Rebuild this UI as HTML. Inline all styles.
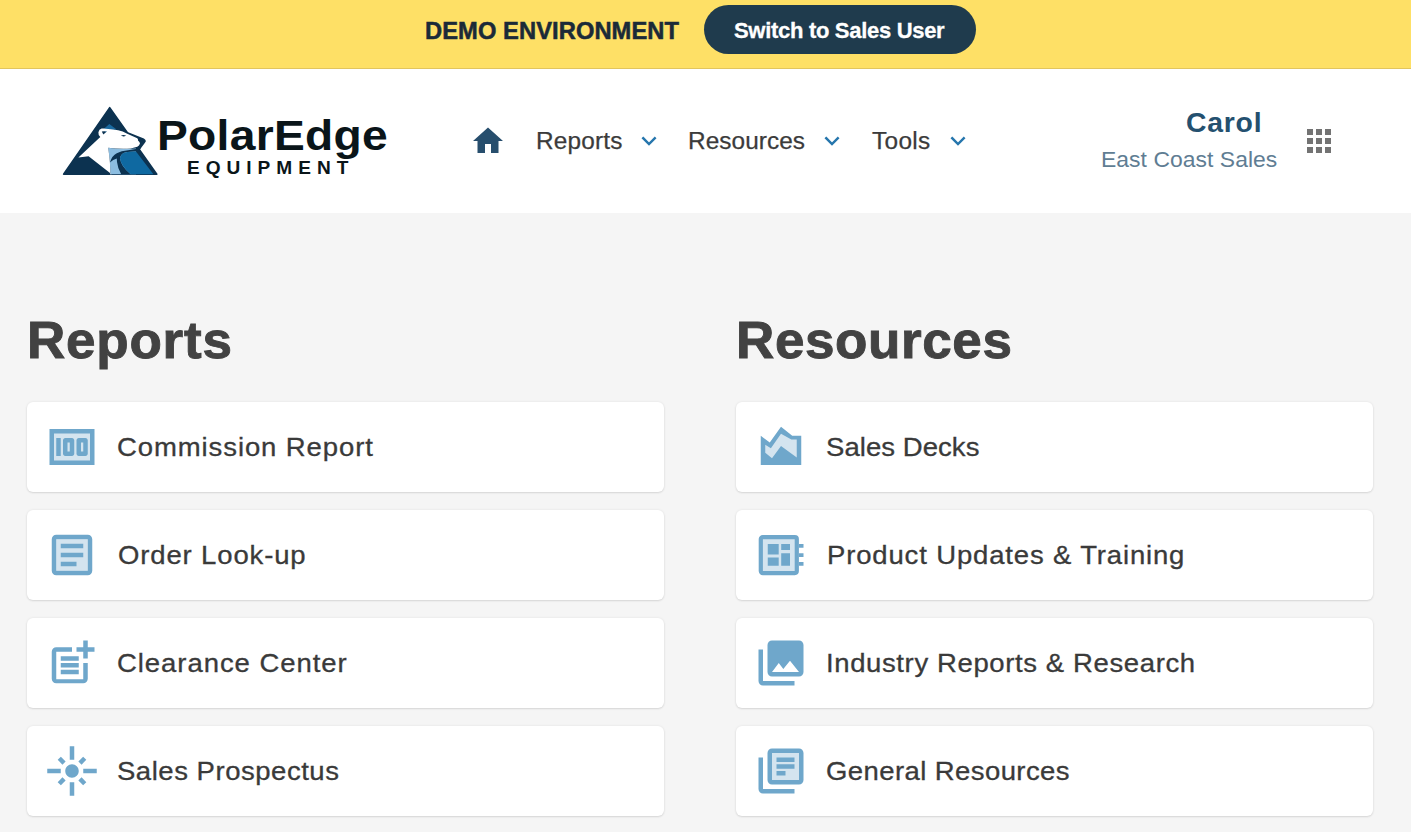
<!DOCTYPE html>
<html><head><meta charset="utf-8">
<style>
*{margin:0;padding:0;box-sizing:border-box}
html,body{width:1411px;height:832px;overflow:hidden;background:#f5f5f5;font-family:"Liberation Sans",sans-serif}
.abs{position:absolute;white-space:nowrap;line-height:1}
#banner{position:absolute;left:0;top:0;width:1411px;height:69px;background:#fee066;border-bottom:1px solid #e2c55e}
#header{position:absolute;left:0;top:69px;width:1411px;height:144px;background:#fff}
.card{position:absolute;width:637px;height:90px;background:#fff;border-radius:6px;box-shadow:0 0 3px rgba(0,0,0,0.07),0 1px 2px rgba(0,0,0,0.1)}
.ct{position:absolute;left:90px;top:33px;font-size:25px;color:#3a3a3a;-webkit-text-stroke:0.3px #3a3a3a;white-space:nowrap;line-height:1}
.ic{position:absolute;left:18px;top:18px;width:54px;height:54px}
h2{position:absolute;font-size:52px;font-weight:bold;color:#424242;-webkit-text-stroke:0.9px #424242;white-space:nowrap;line-height:1}
.nav{position:absolute;font-size:23px;color:#3b3b3b;-webkit-text-stroke:0.25px #3b3b3b;white-space:nowrap;line-height:1}
.chev{position:absolute;width:16px;height:10px}
</style></head>
<body>
<div id="banner"></div>
<div class="abs" id="demo" style="left:424.5px;letter-spacing:0.08px;transform-origin:0 0;transform:scaleX(1.03);top:20px;font-size:23px;font-weight:bold;color:#1b2a38;-webkit-text-stroke:0.5px #1b2a38;">DEMO ENVIRONMENT</div>
<div class="abs" style="left:704px;top:5.4px;width:272px;height:48.8px;border-radius:25px;background:#1f3b4d"></div>
<div class="abs" id="sw" style="left:734px;letter-spacing:-0.302px;top:20.4px;font-size:22px;font-weight:bold;color:#fff;-webkit-text-stroke:0.3px #fff;">Switch to Sales User</div>

<div id="header"></div>

<!-- logo -->
<svg class="abs" style="left:58px;top:100px" width="110" height="82" viewBox="58 100 110 82">
  <path d="M109.7 107.6 L63.6 174.2 L156.8 174.2 Z" fill="#0c3250" stroke="#0c3250" stroke-width="1.6" stroke-linejoin="round"/>
  <path d="M125.8 131.4 L130.1 133.1 L143.9 138.4 Q146.2 139.8 145.8 141.4 L144.4 143.6 L141.4 147.6 L140.4 149 L132 148 Z" fill="#0c3250"/>
  <path d="M109.3 124.1 L102.8 129.8 L116.5 129.6 Z" fill="#1a6aa0"/>
  <path d="M108.2 147.8 Q121 149.8 136 148.6 L136 174.2 L110.3 174.2 Q110.6 164 108.2 147.8 Z" fill="#8cbde0"/>
  <path d="M109.9 162.5 Q112 155.5 116.8 153.2 Q121 151 128.1 150.3 L140.4 148.3 L139.5 151.6 L134.7 151.5 Q126 151.6 123.5 153 Q120 155.5 120.1 158.5 Q120.8 166 130.7 174.2 L121.2 174.2 Q117.6 168 117 162 L116.8 158.4 Q113 159.5 109.9 162.5 Z" fill="#0c3250"/>
  <path d="M123.5 153 Q126 151.6 134.7 151.5 L136 151.5 L153.4 174.2 L130.7 174.2 Q120.8 166 120.1 158.5 Q120 155.5 123.5 153 Z" fill="#0f69a1"/>
  <path d="M100.3 136.9 Q98 134.5 98.4 132.2 Q99 129.4 101.6 128.6 Q104.5 128.2 108.2 129 Q113 129.5 118.1 130.3 Q123 131 126.7 133.5 L137.3 138.2 Q138.4 139.4 138 140.5 Q139.8 141.8 140 143.5 Q139.2 145.8 137.3 146.8 L130.7 148.5 Q120 149.2 108.2 147.8 Q110.6 164 110.3 174.2 L111.6 174.2 L88.6 156.2 L78.4 157.4 Z" fill="#fff"/>
  <path d="M101.8 131.4 Q104.5 130.8 106.8 131.6 L103.4 134.4 Z" fill="#0c3250"/>
  <path d="M105 131.4 L106.8 131.6 L105.2 132.8 Z" fill="#4a90c0"/>
  <path d="M120.8 135.6 Q123.5 134.4 126.1 135.5 Q123.5 137.2 120.8 135.6 Z" fill="#0c3250"/>
</svg>
<div class="abs" id="logo1" style="left:157px;top:115px;font-size:42px;font-weight:bold;color:#0a1519;letter-spacing:0.25px;transform-origin:0 0;transform:scaleX(1.1)">PolarEdge</div>
<div class="abs" id="logo2" style="left:187px;top:159px;font-size:18px;font-weight:bold;color:#0a1519;letter-spacing:5.65px;transform-origin:0 0;transform:scaleX(1.06)">EQUIPMENT</div>

<!-- nav -->
<svg class="abs" style="left:470.2px;top:123.3px" width="36" height="36" viewBox="0 0 24 24"><path d="M10 20v-6h4v6h5v-8h3L12 3 2 12h3v8z" fill="#274e6d"/></svg>
<div class="nav" id="n1" style="left:535.6px;letter-spacing:0.16px;transform-origin:0 0;transform:scaleX(1.06);top:130px;">Reports</div>
<svg class="chev abs" style="left:641px;top:136px" width="16" height="10" viewBox="0 0 16 10"><path d="M2.2 2.2 L8 8 L13.8 2.2" fill="none" stroke="#2676ad" stroke-width="2.4" stroke-linecap="square"/></svg>
<div class="nav" id="n2" style="left:688px;letter-spacing:0.052px;transform-origin:0 0;transform:scaleX(1.06);top:130px;">Resources</div>
<svg class="chev abs" style="left:824px;top:136px" width="16" height="10" viewBox="0 0 16 10"><path d="M2.2 2.2 L8 8 L13.8 2.2" fill="none" stroke="#2676ad" stroke-width="2.4" stroke-linecap="square"/></svg>
<div class="nav" id="n3" style="left:872.2px;letter-spacing:0.328px;transform-origin:0 0;transform:scaleX(1.06);top:130px;">Tools</div>
<svg class="chev abs" style="left:950px;top:136px" width="16" height="10" viewBox="0 0 16 10"><path d="M2.2 2.2 L8 8 L13.8 2.2" fill="none" stroke="#2676ad" stroke-width="2.4" stroke-linecap="square"/></svg>

<div class="abs" id="carol" style="left:1186.1px;letter-spacing:0.727px;transform-origin:0 0;transform:scaleX(1.05);top:110px;font-size:27px;font-weight:bold;color:#24506f">Carol</div>
<div class="abs" id="ecs" style="left:1100.5px;letter-spacing:0.05px;transform-origin:0 0;transform:scaleX(1.04);top:149px;font-size:22px;color:#607d93">East Coast Sales</div>
<svg class="abs" style="left:1301px;top:123px" width="36" height="36" viewBox="0 0 24 24"><path d="M4 8h4V4H4v4zm6 12h4v-4h-4v4zm-6 0h4v-4H4v4zm0-6h4v-4H4v4zm6 0h4v-4h-4v4zm6-10v4h4V4h-4zm-6 4h4V4h-4v4zm6 6h4v-4h-4v4zm0 6h4v-4h-4v4z" fill="#737373"/></svg>

<h2 id="h_rep" style="left:26.8px;letter-spacing:0.732px;transform-origin:0 0;transform:scaleX(1.02);top:314px;">Reports</h2>
<h2 id="h_res" style="left:735.8px;letter-spacing:0.574px;transform-origin:0 0;transform:scaleX(1.02);top:314px;">Resources</h2>

<!-- left column -->
<div class="card" style="left:27px;top:402px">
  <svg class="ic" viewBox="0 0 24 24"><path d="M2 4h20v16H2z" fill="#6fa7cb"/><path d="M4 6h16v12H4z" fill="#d4e4ef"/><path d="M5 8h2v8H5zm7 0H9c-.55 0-1 .45-1 1v6c0 .55.45 1 1 1h3c.55 0 1-.45 1-1V9c0-.55-.45-1-1-1zm-1 6h-1v-4h1v4zm7-6h-3c-.55 0-1 .45-1 1v6c0 .55.45 1 1 1h3c.55 0 1-.45 1-1V9c0-.55-.45-1-1-1zm-1 6h-1v-4h1v4z" fill="#6fa7cb"/></svg>
  <div class="ct" id="t1" style="left:89.9px;letter-spacing:0.819px;transform-origin:0 0;transform:scaleX(1.1);">Commission Report</div></div>
<div class="card" style="left:27px;top:510px">
  <svg class="ic" viewBox="0 0 24 24"><path d="M5 5h14v14H5z" fill="#d4e4ef"/><path d="M19 5v14H5V5h14m0-2H5c-1.1 0-2 .9-2 2v14c0 1.1.9 2 2 2h14c1.1 0 2-.9 2-2V5c0-1.1-.9-2-2-2zM14 17H7v-2h7v2zm3-4H7v-2h10v2zm0-4H7V7h10v2z" fill="#6fa7cb"/></svg>
  <div class="ct" id="t2" style="left:90.5px;letter-spacing:0.784px;transform-origin:0 0;transform:scaleX(1.1);">Order Look-up</div></div>
<div class="card" style="left:27px;top:618px">
  <svg class="ic" viewBox="0 0 24 24"><path d="M17 19.22H5V7h7V5H5c-1.1 0-2 .9-2 2v12c0 1.1.9 2 2 2h12c1.1 0 2-.9 2-2v-7h-2v7.22zM19 2h-2v3h-3v2h3v3h2V7h3V5h-3V2zM7 9h8v2H7zm0 3h8v2H7zm0 3h8v2H7z" fill="#6fa7cb"/></svg>
  <div class="ct" id="t3" style="left:89.5px;letter-spacing:0.86px;transform-origin:0 0;transform:scaleX(1.1);">Clearance Center</div></div>
<div class="card" style="left:27px;top:726px">
  <svg class="ic" viewBox="0 0 24 24"><path d="M7 11H1v2h6v-2zm2.17-3.24L7.05 5.64 5.64 7.05l2.12 2.12 1.41-1.41zM13 1h-2v6h2V1zm5.36 6.05l-1.41-1.41-2.12 2.12 1.41 1.41 2.12-2.12zM17 11v2h6v-2h-6zm-5-2c-1.66 0-3 1.34-3 3s1.34 3 3 3 3-1.34 3-3-1.34-3-3-3zm2.83 7.24l2.12 2.12 1.41-1.41-2.12-2.12-1.41 1.41zm-9.19.71l1.41 1.41 2.12-2.12-1.41-1.41-2.12 2.12zM11 23h2v-6h-2v6z" fill="#6fa7cb"/></svg>
  <div class="ct" id="t4" style="left:89.5px;letter-spacing:0.48px;transform-origin:0 0;transform:scaleX(1.1);">Sales Prospectus</div></div>

<!-- right column -->
<div class="card" style="left:736px;top:402px">
  <svg class="ic" viewBox="0 0 24 24"><path d="M3 7L7 10L12 3L17 7H21V20H3Z" fill="#6fa7cb"/><path d="M5 11L7.5 12.6L12 6.1L16.6 8.7H19V16.7L12 11.6L8 17L5 14.5Z" fill="#d4e4ef"/></svg>
  <div class="ct" id="t5" style="left:90px;letter-spacing:0.052px;transform-origin:0 0;transform:scaleX(1.1);">Sales Decks</div></div>
<div class="card" style="left:736px;top:510px">
  <svg class="ic" viewBox="0 0 54 54"><rect x="6.8" y="9.1" width="36" height="36" rx="2" fill="#d4e4ef" stroke="#6fa7cb" stroke-width="4.2"/><path d="M44.9 16h4.6v3.8h-4.6zM44.9 25.2h4.6v3.8h-4.6zM44.9 34h4.6v3.8h-4.6zM13.75 16h10.95v10.5H13.75zM13.75 29.4h10.95v8.4H13.75zM27.2 16h8.8v5.9h-8.8zM27.2 25.2h8.8v12.6h-8.8z" fill="#6fa7cb"/></svg>
  <div class="ct" id="t6" style="left:90.5px;letter-spacing:0.768px;transform-origin:0 0;transform:scaleX(1.1);">Product Updates &amp; Training</div></div>
<div class="card" style="left:736px;top:618px">
  <svg class="ic" viewBox="0 0 24 24"><path d="M22 16V4c0-1.1-.9-2-2-2H8c-1.1 0-2 .9-2 2v12c0 1.1.9 2 2 2h12c1.1 0 2-.9 2-2zm-11-4l2.03 2.71L16 11l4 5H8l3-4zM2 6v14c0 1.1.9 2 2 2h14v-2H4V6H2z" fill="#6fa7cb"/></svg>
  <div class="ct" id="t7" style="left:89.5px;letter-spacing:0.56px;transform-origin:0 0;transform:scaleX(1.1);">Industry Reports &amp; Research</div></div>
<div class="card" style="left:736px;top:726px">
  <svg class="ic" viewBox="0 0 24 24"><path d="M8 4h12v12H8z" fill="#d4e4ef"/><path d="M4 6H2v14c0 1.1.9 2 2 2h14v-2H4V6zm16-4H8c-1.1 0-2 .9-2 2v12c0 1.1.9 2 2 2h12c1.1 0 2-.9 2-2V4c0-1.1-.9-2-2-2zm0 14H8V4h12v12zM10 9h8v2h-8zm0 3h4v2h-4zm0-6h8v2h-8z" fill="#6fa7cb"/></svg>
  <div class="ct" id="t8" style="left:90px;letter-spacing:0.378px;transform-origin:0 0;transform:scaleX(1.1);">General Resources</div></div>

</body></html>
